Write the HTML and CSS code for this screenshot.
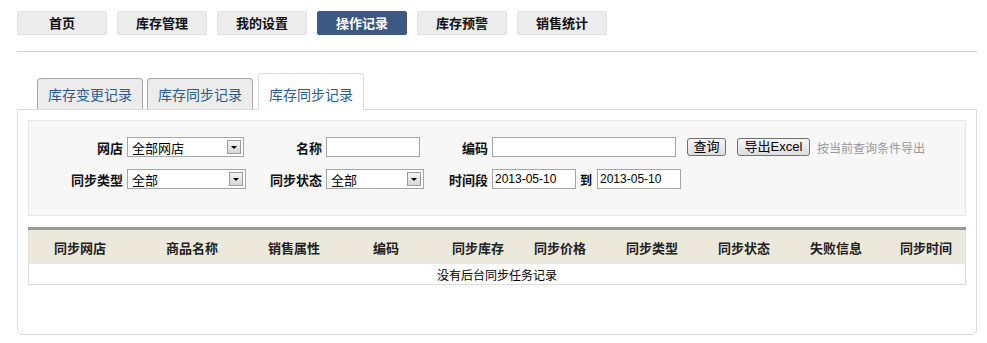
FILE: index.html
```html
<!DOCTYPE html>
<html lang="zh-cn">
<head>
    <meta charset="UTF-8">
    <title>操作记录 - 库存同步记录</title>
    <link rel="stylesheet" href="styles.css">
</head>
<body>
    <div class="nav">
        <a class="nav-btn">首页</a>
        <a class="nav-btn">库存管理</a>
        <a class="nav-btn">我的设置</a>
        <a class="nav-btn active">操作记录</a>
        <a class="nav-btn">库存预警</a>
        <a class="nav-btn">销售统计</a>
    </div>

    <div class="tabs">
        <a class="tab">库存变更记录</a>
        <a class="tab">库存同步记录</a>
        <a class="tab current">库存同步记录</a>
    </div>

    <div class="panel">
        <div class="search-box">
            <div class="search-grid">
                <label>网店</label>
                <div class="select w117"><span>全部网店</span><i class="arrow"></i></div>
                <label>名称</label>
                <div><input type="text" class="txt w94"></div>
                <label>编码</label>
                <div class="cell">
                    <input type="text" class="txt w184">
                    <button class="btn btn-query">查询</button>
                    <button class="btn btn-export">导出Excel</button>
                    <span class="tip">按当前查询条件导出</span>
                </div>

                <label>同步类型</label>
                <div class="select w119"><span>全部</span><i class="arrow"></i></div>
                <label>同步状态</label>
                <div class="select w98"><span>全部</span><i class="arrow"></i></div>
                <label>时间段</label>
                <div class="cell">
                    <input type="text" class="txt w84" value="2013-05-10">
                    <b class="to">到</b>
                    <input type="text" class="txt w84" value="2013-05-10">
                </div>
            </div>
        </div>

        <table class="list">
            <thead>
                <tr>
                    <th style="width:102px">同步网店</th>
                    <th style="width:122px">商品名称</th>
                    <th style="width:82px">销售属性</th>
                    <th style="width:102px">编码</th>
                    <th style="width:82px">同步库存</th>
                    <th style="width:82px">同步价格</th>
                    <th style="width:102px">同步类型</th>
                    <th style="width:82px">同步状态</th>
                    <th style="width:102px">失败信息</th>
                    <th>同步时间</th>
                </tr>
            </thead>
            <tbody>
                <tr>
                    <td colspan="10" class="empty">没有后台同步任务记录</td>
                </tr>
            </tbody>
        </table>
    </div>
</body>
</html>
```

FILE: styles.css
```css
body {
    margin: 0;
    padding: 11px 10px 0 17px;
    font-family: "SimSun", "Noto Sans CJK SC", "Liberation Sans", sans-serif;
    font-size: 12px;
    color: #000;
    background: #fff;
}
.nav {
    display: flex;
    gap: 10px;
    width: 960px;
    padding-bottom: 16px;
    border-bottom: 1px solid #d0d0d0;
}
.nav-btn {
    width: 88px;
    height: 22px;
    line-height: 22px;
    text-align: center;
    font-size: 13px;
    font-weight: bold;
    color: #111;
    background: #ececec;
    border: 1px solid #e2e2e2;
    border-radius: 2px;
}
.nav-btn.active {
    color: #fff;
    background: #3d5882;
    border-color: #3d5882;
}
.tabs {
    display: flex;
    align-items: flex-end;
    gap: 4px;
    height: 36px;
    margin-top: 21px;
    padding-left: 20px;
    position: relative;
    z-index: 1;
}
.tab {
    width: 104px;
    height: 30px;
    line-height: 30px;
    text-align: center;
    font-size: 14px;
    color: #2a5c91;
    background: #ececec;
    border: 1px solid #a9a9a9;
    border-bottom: none;
    border-radius: 4px 4px 0 0;
}
.tab.current {
    height: 36px;
    line-height: 40px;
    margin-left: 1px;
    background: #fff;
    border-color: #dcdcdc;
    margin-bottom: -1px;
}
.panel {
    width: 938px;
    height: 214px;
    padding: 10px 10px 0 10px;
    border: 1px solid #dcdcdc;
    border-radius: 0 0 5px 5px;
}
.search-box {
    height: 78px;
    padding-top: 16px;
    background: #f7f7f7;
    border: 1px solid #e6e6e6;
}
.search-grid {
    display: grid;
    grid-template-columns: 98px 119px 80px 98px 68px auto;
    row-gap: 12px;
    align-items: center;
}
.search-grid label {
    text-align: right;
    padding-right: 4px;
    font-weight: bold;
    font-size: 13px;
    color: #111;
}
.cell {
    display: flex;
    align-items: center;
}
.select {
    display: flex;
    justify-content: space-between;
    align-items: center;
    box-sizing: border-box;
    height: 20px;
    padding: 0 2px 0 4px;
    background: #fff;
    border: 1px solid #a5a5a5;
    font-size: 13px;
}
.arrow {
    position: relative;
    width: 14px;
    height: 14px;
    box-sizing: border-box;
    border: 1px solid #9a9a9a;
    background: linear-gradient(#f4f4f4, #d8d8d8);
}
.arrow::after {
    content: "";
    position: absolute;
    left: 3px;
    top: 5px;
    border-left: 3px solid transparent;
    border-right: 3px solid transparent;
    border-top: 3px solid #000;
}
.txt {
    box-sizing: border-box;
    height: 20px;
    margin: 0;
    padding: 0 2px;
    border: 1px solid #a5a5a5;
    font-family: "Liberation Sans", sans-serif;
    font-size: 12px;
    color: #000;
}
.w94 { width: 94px; }
.w98 { width: 98px; }
.w117 { width: 117px; }
.w119 { width: 119px; }
.w84 { width: 84px; }
.w184 { width: 184px; }
.btn {
    height: 18px;
    margin-left: 11px;
    padding: 0;
    font-family: "Liberation Sans", "Noto Sans CJK SC", sans-serif;
    font-size: 13px;
    line-height: 14px;
    color: #000;
    background: linear-gradient(#f6f6f6, #dedede);
    border: 1px solid #707070;
    border-radius: 3px;
}
.btn-query { width: 39px; }
.btn-export { width: 73px; }
.tip {
    margin-left: 7px;
    color: #999;
    font-size: 12px;
}
.to {
    margin: 0 5px 0 4px;
    font-size: 12px;
}
.list {
    width: 938px;
    margin-top: 11px;
    border-collapse: collapse;
    border: 1px solid #dcdcdc;
    border-top: 3px solid #999;
}
.list th {
    height: 34px;
    padding: 0;
    font-size: 13px;
    font-weight: bold;
    color: #222;
    background: #ece9dc;
}
.list td.empty {
    height: 20px;
    padding: 0;
    text-align: center;
    font-size: 12px;
}
```
